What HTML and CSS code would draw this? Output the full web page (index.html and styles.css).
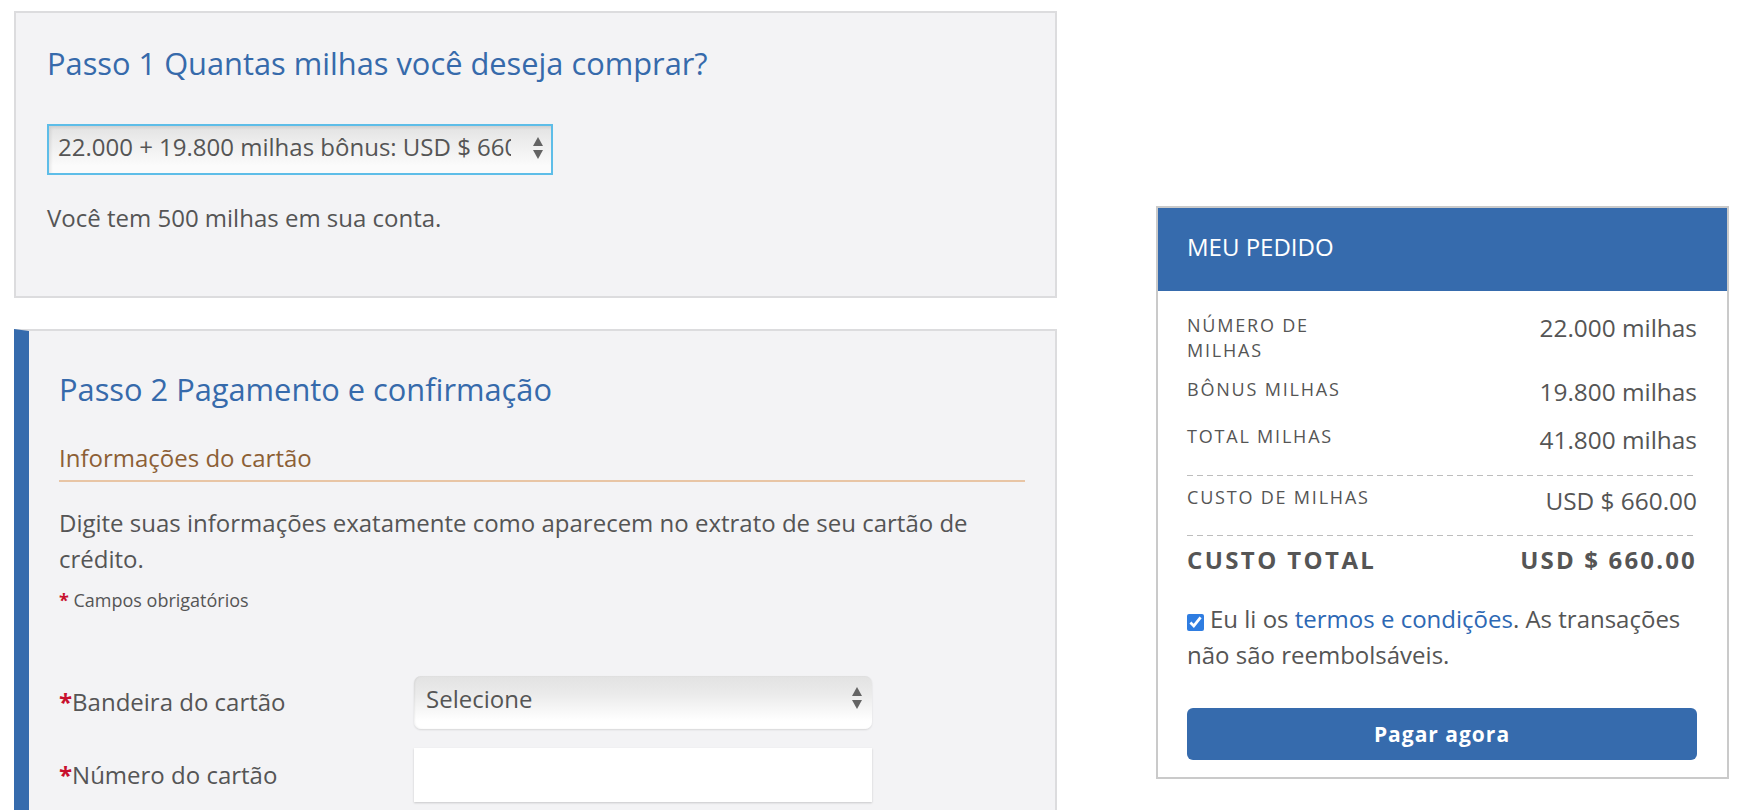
FILE: index.html
```html
<!DOCTYPE html>
<html lang="pt-BR">
<head>
<meta charset="utf-8">
<title>Comprar milhas</title>
<link rel="stylesheet" href="styles.css">
</head>
<body>
<div class="page">
  <main class="steps">
    <section class="step step-1">
      <h2 class="step-title">Passo 1 Quantas milhas você deseja comprar?</h2>
      <div class="select-wrap miles-select">
        <select class="select select-focused" aria-label="Milhas">
          <option>22.000 + 19.800 milhas bônus: USD $ 660.00</option>
        </select>
        <svg class="select-arrows" width="10" height="24" viewBox="0 0 10 24" aria-hidden="true">
          <polygon points="0,10 5,1 10,10" fill="#646464"/>
          <polygon points="0,14 10,14 5,23" fill="#646464"/>
        </svg>
      </div>
      <p class="balance">Você tem 500 milhas em sua conta.</p>
    </section>

    <section class="step step-2">
      <h2 class="step-title">Passo 2 Pagamento e confirmação</h2>
      <h3 class="sub-title">Informações do cartão</h3>
      <p class="intro">Digite suas informações exatamente como aparecem no extrato de seu cartão de crédito.</p>
      <p class="required-note"><span class="req">*</span> Campos obrigatórios</p>
      <div class="form-rows">
        <div class="form-row">
          <label class="field-label" for="bandeira"><span class="req">*</span>Bandeira do cartão</label>
          <div class="select-wrap card-select">
            <select class="select select-soft" id="bandeira">
              <option>Selecione</option>
            </select>
            <svg class="select-arrows" width="10" height="24" viewBox="0 0 10 24" aria-hidden="true">
              <polygon points="0,10 5,1 10,10" fill="#646464"/>
              <polygon points="0,14 10,14 5,23" fill="#646464"/>
            </svg>
          </div>
        </div>
        <div class="form-row">
          <label class="field-label" for="numero"><span class="req">*</span>Número do cartão</label>
          <input class="text-input" id="numero" type="text">
        </div>
      </div>
    </section>
  </main>

  <aside class="order">
    <div class="order-header">MEU PEDIDO</div>
    <div class="order-body">
      <div class="order-rows">
        <div class="order-row">
          <div class="order-label">NÚMERO DE MILHAS</div>
          <div class="order-value">22.000 milhas</div>
        </div>
        <div class="order-row">
          <div class="order-label">BÔNUS MILHAS</div>
          <div class="order-value">19.800 milhas</div>
        </div>
        <div class="order-row">
          <div class="order-label">TOTAL MILHAS</div>
          <div class="order-value">41.800 milhas</div>
        </div>
      </div>
      <div class="sep sep-1"></div>
      <div class="order-row">
        <div class="order-label">CUSTO DE MILHAS</div>
        <div class="order-value">USD $ 660.00</div>
      </div>
      <div class="sep sep-2"></div>
      <div class="order-row total-row">
        <div class="total-label">CUSTO TOTAL</div>
        <div class="total-value">USD $ 660.00</div>
      </div>
      <p class="terms"><input class="terms-check" type="checkbox" checked aria-label="Aceito">Eu li os <a class="terms-link" href="#">termos e condições</a>. As transações não são reembolsáveis.</p>
      <button class="pay-btn" type="button">Pagar agora</button>
    </div>
  </aside>
</div>
</body>
</html>
```

FILE: styles.css
```css
* { box-sizing: border-box; }

html, body {
  margin: 0;
  background: #fff;
}

body {
  font-family: "Open Sans", "Liberation Sans", sans-serif;
  color: #555;
}

.page {
  display: flex;
  align-items: flex-start;
  gap: 99px;
  padding: 11px 0 0 14px;
}

.steps {
  width: 1043px;
  flex: none;
}

.step {
  background: #f3f3f5;
  border: 2px solid #dcdcde;
}

.step-1 {
  padding: 32px 32px 60px 31px;
}

.step-2 {
  margin-top: 31px;
  border-left: 15px solid #356bad;
  padding: 40px 30px 40px 30px;
}

.step-title {
  margin: 0;
  font-size: 30.8px;
  font-weight: 400;
  line-height: 37px;
  color: #366aab;
}

.step-1 .step-title {
  margin-bottom: 42px;
}

.select-wrap {
  position: relative;
}

.miles-select {
  width: 506px;
}

.card-select {
  width: 458px;
}

.select {
  -webkit-appearance: none;
  appearance: none;
  display: block;
  width: 100%;
  font-family: inherit;
  font-size: 24px;
  color: #555;
  margin: 0;
  outline: none;
}

.select-focused {
  height: 51px;
  padding: 0 40px 7px 9px;
  border: 2px solid #5dbde8;
  border-radius: 0;
  background: linear-gradient(#e2e2e2, #ececec 30%, #fbfbfb 85%);
  box-shadow: inset 2px 2px 3px rgba(0, 0, 0, 0.08);
}

.select-soft {
  height: 53px;
  padding: 0 34px 7px 12px;
  border: 0;
  border-radius: 7px;
  background: linear-gradient(#e2e2e2, #ebebeb 35%, #ffffff 85%);
  box-shadow: 0 1px 2px rgba(0, 0, 0, 0.12), inset 1px 0 2px rgba(0, 0, 0, 0.06);
}

.select-arrows {
  position: absolute;
  right: 10px;
  top: 50%;
  margin-top: -14px;
  pointer-events: none;
}

.card-select .select-arrows {
  right: 10px;
  margin-top: -16px;
}

.balance {
  margin: 25px 0 0;
  font-size: 24px;
  line-height: 36px;
}

.sub-title {
  margin: 32px 0 0;
  padding-bottom: 4px;
  font-size: 24px;
  line-height: 36px;
  font-weight: 400;
  color: #8c5f35;
  border-bottom: 2px solid #e8c5a5;
}

.intro {
  margin: 22.5px 0 0;
  font-size: 24px;
  line-height: 36px;
}

.required-note {
  margin: 10px 0 0;
  font-size: 18px;
  line-height: 27px;
}

.req {
  color: #c8102e;
  font-weight: 700;
}

.form-rows {
  margin-top: 62px;
  display: flex;
  flex-direction: column;
  gap: 19px;
}

.form-row {
  display: flex;
  align-items: center;
}

.field-label {
  width: 355px;
  flex: none;
  font-size: 24px;
  line-height: 36px;
}

.text-input {
  width: 458px;
  height: 54px;
  border: 0;
  margin: 0;
  background: #fff;
  box-shadow: 0 1px 2px rgba(0, 0, 0, 0.18);
  font-family: inherit;
  font-size: 24px;
  outline: none;
}

/* Order panel */
.order {
  width: 573px;
  flex: none;
  margin-top: 195px;
  border: 2px solid #cacaca;
  background: #fff;
}

.order-header {
  background: #366bad;
  color: #fff;
  font-size: 24px;
  line-height: 36px;
  padding: 21px 29px 26px;
}

.order-body {
  padding: 19px 30px 17px 29px;
}

.order-rows {
  display: flex;
  flex-direction: column;
  gap: 11.5px;
}

.order-row {
  display: flex;
  justify-content: space-between;
  align-items: flex-start;
  gap: 20px;
}

.order-label {
  width: 200px;
  flex: none;
  padding-top: 2.5px;
  font-size: 18px;
  line-height: 25px;
  letter-spacing: 0.1em;
  color: #555;
}

.order-value {
  font-size: 24.4px;
  line-height: 36px;
  white-space: nowrap;
  text-align: right;
  color: #555;
}

.sep {
  height: 1px;
  background: repeating-linear-gradient(90deg, #bdbdbd 0 6px, transparent 6px 10px);
}

.sep-1 {
  margin: 17px 0 7px;
}

.sep-2 {
  margin: 16.5px 0 6px;
}

.total-row {
  align-items: center;
}

.total-label,
.total-value {
  font-size: 24px;
  line-height: 36px;
  font-weight: 700;
  color: #555;
  white-space: nowrap;
}

.total-label {
  letter-spacing: 0.1em;
}

.total-value {
  letter-spacing: 0.09em;
}

.terms {
  margin: 23px 0 0;
  font-size: 24px;
  line-height: 36px;
}

.terms-check {
  width: 17px;
  height: 17px;
  margin: 0 6px 0 0;
  vertical-align: -3px;
  accent-color: #2f7de1;
}

.terms-link {
  color: #2d68b4;
  text-decoration: none;
}

.pay-btn {
  display: block;
  width: 100%;
  height: 52px;
  margin-top: 35px;
  border: 0;
  border-radius: 6px;
  background: #366bad;
  color: #fff;
  font-family: inherit;
  font-size: 21px;
  font-weight: 700;
  letter-spacing: 1px;
}
```
